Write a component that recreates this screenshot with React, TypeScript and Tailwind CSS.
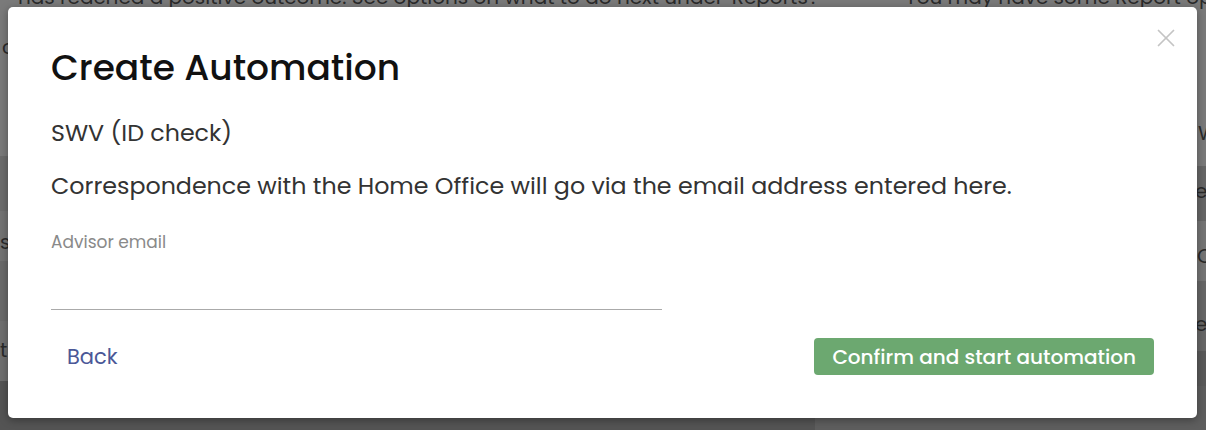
import React from 'react';
import { X } from 'lucide-react';

const font = { fontFamily: '"Poppins", "Inter", "Noto Sans", sans-serif' };

// Page behind the dimmed overlay (mostly hidden)
function BackgroundPage() {
  return (
    <div className="flex w-full h-full bg-[#7a7a7a] text-[#2a2a2a] text-[20px]">
      <div className="flex flex-col w-[815px]">
        <div className="h-[40px] -mt-[14px] pl-[18px] leading-[22px] whitespace-nowrap">
          has reached a positive outcome. See options on what to do next under 'Reports'.
        </div>
        <div className="h-[130px] pl-[2px] pt-[6px]">c</div>
        <div className="h-[55px] bg-[#6c6c6c] pl-[8px] pt-[14px]">c</div>
        <div className="h-[50px] bg-[#737373] pt-[16px]">s</div>
        <div className="h-[60px] bg-[#6a6a6a]"></div>
        <div className="h-[60px] bg-[#6f6f6f] pt-[14px]">t</div>
        <div className="flex-1 bg-[#545454]"></div>
      </div>
      <div className="flex flex-col flex-1 bg-[#7a7a7a]">
        <div className="h-[40px] -mt-[14px] pl-[90px] leading-[22px] whitespace-nowrap">
          You may have some Report options
        </div>
        <div className="h-[140px] pl-[383px] pt-[92px]">W</div>
        <div className="h-[55px] bg-[#666666] pl-[380px] pt-[10px]">e</div>
        <div className="h-[60px] bg-[#757575] pl-[382px] pt-[20px]">C</div>
        <div className="h-[70px] bg-[#676767] pl-[380px] pt-[28px]">e</div>
        <div className="h-[35px] bg-[#5a5a5a]"></div>
        <div className="flex-1 bg-[#5e5e5e] pl-[75px] pt-[2px] font-medium text-[26px] leading-[32px] text-[#1e1e1e] whitespace-nowrap">
          Automations
        </div>
      </div>
    </div>
  );
}

export default function App() {
  return (
    <div className="relative w-[1206px] h-[430px] overflow-hidden" style={font}>
      <BackgroundPage />

      {/* Modal */}
      <div className="absolute left-[8px] top-[7px] w-[1189px] h-[411px] bg-white rounded-[5px] shadow-[0_2px_8px_rgba(0,0,0,0.35)] pl-[43px] pr-[43px]">
        <button className="absolute right-[16px] top-[16px] text-[#c4c4c4]" aria-label="Close">
          <X size={30} strokeWidth={1.4} />
        </button>

        <h2 className="pt-[39px] text-[36px] leading-[44px] font-medium text-[#111111]">
          Create Automation
        </h2>

        <p className="mt-[28px] text-[23.75px] leading-[30px] text-[#333333]">SWV (ID check)</p>

        <p className="mt-[23px] text-[23.75px] leading-[30px] text-[#333333]">
          Correspondence with the Home Office will go via the email address entered here.
        </p>

        <div className="mt-[31px] w-[611px]">
          <label className="block text-[17px] leading-[20px] text-[#8a8a8a]">Advisor email</label>
          <input
            type="email"
            className="block w-full h-[58px] bg-transparent outline-none border-b-[1.5px] border-[#aaaaaa] text-[18px] text-[#333333]"
          />
        </div>

        <div className="flex items-center justify-between mt-[28px]">
          <button className="ml-[16px] text-[21px] leading-[28px] text-[#4b5897]">Back</button>
          <button className="h-[37px] px-[18px] rounded-[4px] bg-[#6ca870] text-white text-[20px] leading-[28px] font-medium">
            Confirm and start automation
          </button>
        </div>
      </div>
    </div>
  );
}
